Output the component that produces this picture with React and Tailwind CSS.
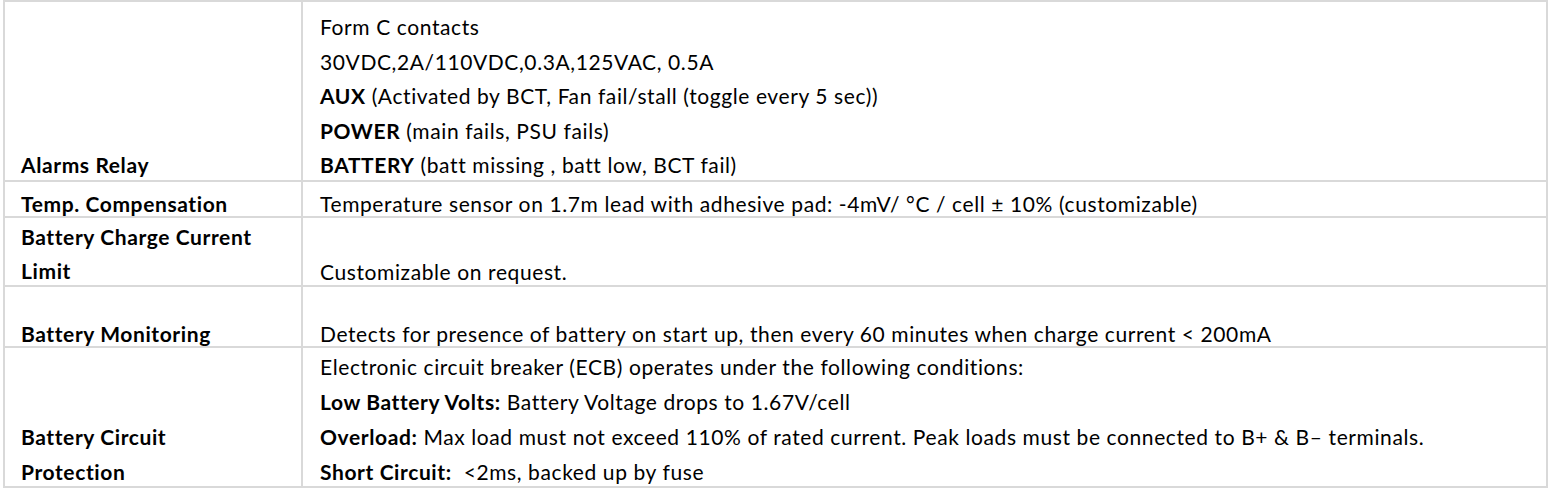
import React from 'react'

const rows = [
  {
    label: ['Alarms Relay'],
    h: 'h-[178px]',
    lpt: 'pt-[146px]',
    rpt: 'pt-[8px]',
    lead: 'leading-[34.5px]',
    lines: [
      <>Form C contacts</>,
      <>30VDC,2A/110VDC,0.3A,125VAC, 0.5A</>,
      <><b>AUX</b> (Activated by BCT, Fan fail/stall (toggle every 5 sec))</>,
      <><b>POWER</b> (main fails, PSU fails)</>,
      <><b>BATTERY</b> (batt missing , batt low, BCT fail)</>,
    ],
  },
  {
    label: ['Temp. Compensation'],
    h: 'h-[34px]',
    lpt: 'pt-[4px]',
    rpt: 'pt-[4px]',
    lead: 'leading-[35px]',
    lines: [<>Temperature sensor on 1.7m lead with adhesive pad: -4mV/ °C / cell ± 10% (customizable)</>],
  },
  {
    label: ['Battery Charge Current', 'Limit'],
    h: 'h-[67px]',
    lpt: 'pt-[2px]',
    rpt: 'pt-[37px]',
    lead: 'leading-[34px]',
    lines: [<>Customizable on request.</>],
  },
  {
    label: ['Battery Monitoring'],
    h: 'h-[59px]',
    lpt: 'pt-[29px]',
    rpt: 'pt-[29px]',
    lead: 'leading-[35px]',
    lines: [<>Detects for presence of battery on start up, then every 60 minutes when charge current &lt; 200mA</>],
  },
  {
    label: ['Battery Circuit', 'Protection'],
    h: 'h-[138px]',
    lpt: 'pt-[71px]',
    rpt: 'pt-[1px]',
    lead: 'leading-[35px]',
    lines: [
      <>Electronic circuit breaker (ECB) operates under the following conditions:</>,
      <><b>Low Battery Volts:</b> Battery Voltage drops to 1.67V/cell</>,
      <><b>Overload:</b> Max load must not exceed 110% of rated current. Peak loads must be connected to B+ &amp; B– terminals.</>,
      <><b>Short Circuit:</b>&nbsp; &lt;2ms, backed up by fuse</>,
    ],
  },
]

export default function App() {
  return (
    <div className="bg-white w-[1553px] h-[490px] overflow-hidden text-[21px] tracking-[0.6px] text-black" style={{ fontFamily: 'Lato, "Liberation Sans", sans-serif' }}>
      <div className="ml-[3px] w-[1545px] border-2 border-[#d9d9d9]">
        {rows.map((r, i) => (
          <div key={i} className={`flex ${r.lead} ${i > 0 ? 'border-t-2 border-[#d9d9d9]' : ''}`}>
            <div className={`w-[298px] shrink-0 border-r-2 border-[#d9d9d9] ${r.h} ${r.lpt} pl-[16px] font-bold`}>
              {r.label.map((l, j) => <div key={j} className="whitespace-nowrap">{l}</div>)}
            </div>
            <div className={`flex-1 ${r.h} ${r.rpt} pl-[17px]`}>
              {r.lines.map((l, j) => <div key={j} className="whitespace-nowrap">{l}</div>)}
            </div>
          </div>
        ))}
      </div>
    </div>
  )
}
